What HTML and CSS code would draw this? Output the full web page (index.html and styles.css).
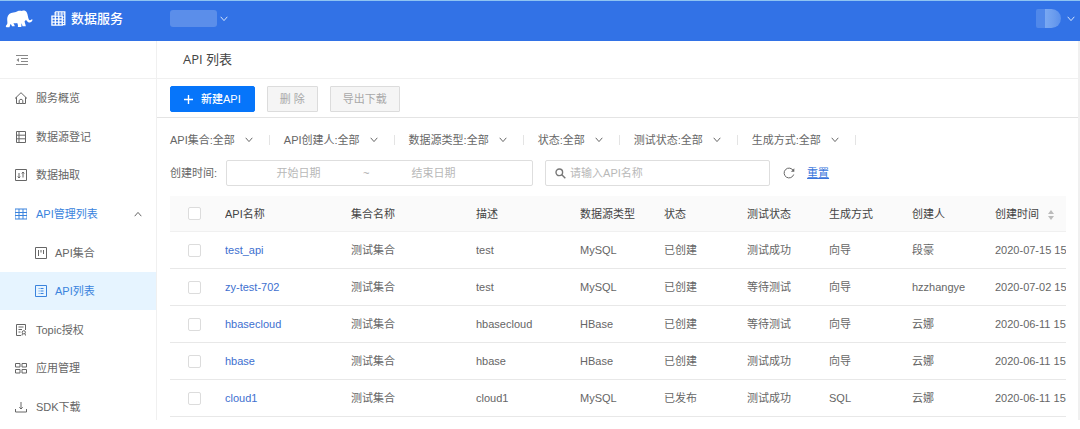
FILE: index.html
```html
<!DOCTYPE html>
<html lang="zh-CN">
<head>
<meta charset="utf-8">
<title>数据服务 - API 列表</title>
<link rel="stylesheet" href="styles.css">
</head>
<body>
<svg class="defs" aria-hidden="true">
  <symbol id="chevron" viewBox="0 0 8 8"><path d="M0.7 1.8 4 5.6 7.3 1.8" fill="none" stroke="currentColor"/></symbol>
</svg>
<header class="topbar">
  <svg class="logo" viewBox="0 0 28 18" aria-label="logo"><path fill="#fff" d="M.8 16.500C.8 15.500 2.200 14.800 2.400 13.200C2.500 11.500 2 10 2.300 7.800C2.800 4.500 5 2.600 8.500 2.400C10.500 2.300 11.500 1.900 13 1.100C14.500.300 15.800.900 17 .900C18.800.200 20.800.700 21.800 2.600C22.800 4.500 22.900 7.300 23.700 9.300C24.200 10.500 25.600 10.600 26.800 9.200L27.600 9.800C27 12 25.300 13 23.700 12.400C22.200 11.800 21.700 10.600 21 9.800C20.500 10.500 20 11 19.600 11.300C19.800 13 20.600 14.300 20.800 16.300H17.500L16.700 13.200C16.200 14.300 16.600 15.300 16.300 17H12.900C13.200 15.400 12.700 14.200 12.200 13C10.800 13.400 9.600 13.400 8.500 13.200C8.700 14.200 9.700 14.800 9.700 16.300H7C6.700 15.200 6.300 14.500 5.600 13.900C4.900 14.900 5 16.200 4.400 17.300H1.400Z"/></svg>
  <div class="product">
    <svg class="product-icon" viewBox="0 0 16 16" fill="none" stroke="#fff"><path d="M4.500 1H14.700V14.500H12M4.500 1V5" stroke-width="1.400"/><path d="M1 5.500H12V15H1ZM1 8.600H12M1 11.800H12M4.600 5.500V15M8.300 5.500V15" stroke-width="1.400"/><path d="M5 3.200H14M8 1V5M11.500 1V5M12 6.500H14.500M12 9.500H14.500M12 12.200H14.500" stroke-width=".9"/></svg>
    <span>数据服务</span>
  </div>
  <button class="picker project" aria-label="项目"><span class="mask"></span><svg class="chev"><use href="#chevron"/></svg></button>
  <button class="picker user" aria-label="用户"><span class="mask avatar"></span><svg class="chev"><use href="#chevron"/></svg></button>
</header>
<div class="shell">
  <nav class="sidebar">
    <button class="collapse" aria-label="收起"><svg class="icon" viewBox="0 0 12 12"><path d="M0 1.500H12M5 4.500H12M5 7.500H12M0 10.500H12"/><path d="M3 4 .5 6 3 8Z" fill="currentColor" stroke="none"/></svg></button>
    <ul class="menu">
      <li><a href="#"><svg class="icon" viewBox="0 0 12 12"><path d="M0 6.500 6 .7l6 5.800M1.500 5.200V11.500H4.200V8.300Q6 5.900 7.800 8.300V11.500H10.500V5.200M4.200 11.500H7.800"/></svg>服务概览</a></li>
      <li><a href="#"><svg class="icon" viewBox="0 0 12 12"><path d="M1.500.5H10.500V11.500H1.500ZM1.500 4.200H10.500M1.500 7.800H10.500M4 .5V11.500"/></svg>数据源登记</a></li>
      <li><a href="#"><svg class="icon" viewBox="0 0 12 12"><path d="M.5.5H11.500V11.500H.5ZM4 4V9M2.800 7.500 4 9 5.200 7.500M8 8.500V3M6.800 4.500 8 3 9.200 4.500"/></svg>数据抽取</a></li>
      <li class="group">
        <a href="#" class="active"><svg class="icon" viewBox="0 0 12 12"><path d="M0 1H12V11H0ZM0 4.500H12M0 7.500H12M4 1V11M8 1V11"/></svg>API管理列表<svg class="chev up"><use href="#chevron"/></svg></a>
        <ul class="submenu">
          <li><a href="#"><svg class="icon" viewBox="0 0 12 12"><path d="M.5.5H11.500V11.500H.5ZM3.500 3V9M6 3V5.500M8.500 3V7"/></svg>API集合</a></li>
          <li><a href="#" class="active current"><svg class="icon" viewBox="0 0 12 12"><path d="M.5.5H11.500V11.500H.5ZM5.500 3.500H8.500M5.500 6H8.500M5.500 8.500H8.500M3.700 3.500H4.500M3.700 6H4.500M3.700 8.500H4.500"/></svg>API列表</a></li>
        </ul>
      </li>
      <li><a href="#"><svg class="icon" viewBox="0 0 12 12"><path d="M6 11.500H1.500V.5H10.500V6M3.500 3H8.500M3.500 5.500H7M3.500 8H5.500M7 11.500 7.500 9.500M10.500 11.500 10 9.500"/><circle cx="8.800" cy="8.300" r="1.600"/></svg>Topic授权</a></li>
      <li><a href="#"><svg class="icon" viewBox="0 0 12 12"><path d="M.5 1.500H5V5H.5ZM7 1.500H11.500V5H7ZM.5 7.500H5V11H.5ZM7 7.500H11.500V11H7Z"/></svg>应用管理</a></li>
      <li><a href="#"><svg class="icon" viewBox="0 0 12 12"><path d="M6 1V8M4.300 6.300 6 8 7.700 6.300M.5 8V11H11.500V8"/></svg>SDK下载</a></li>
    </ul>
  </nav>
  <main class="content">
    <h1 class="title">API 列表</h1>
    <div class="toolbar">
      <button class="btn primary"><svg class="plus" viewBox="0 0 9 9"><path d="M4.500 0V9M0 4.500H9"/></svg>新建API</button>
      <button class="btn" disabled>删 除</button>
      <button class="btn" disabled>导出下载</button>
    </div>
    <div class="filters">
      <div class="filter"><label for="f1">API集合:</label><span class="drop"><select id="f1"><option>全部</option></select><svg class="chev"><use href="#chevron"/></svg></span></div>
      <div class="filter"><label for="f2">API创建人:</label><span class="drop"><select id="f2"><option>全部</option></select><svg class="chev"><use href="#chevron"/></svg></span></div>
      <div class="filter"><label for="f3">数据源类型:</label><span class="drop"><select id="f3"><option>全部</option></select><svg class="chev"><use href="#chevron"/></svg></span></div>
      <div class="filter"><label for="f4">状态:</label><span class="drop"><select id="f4"><option>全部</option></select><svg class="chev"><use href="#chevron"/></svg></span></div>
      <div class="filter"><label for="f5">测试状态:</label><span class="drop"><select id="f5"><option>全部</option></select><svg class="chev"><use href="#chevron"/></svg></span></div>
      <div class="filter"><label for="f6">生成方式:</label><span class="drop"><select id="f6"><option>全部</option></select><svg class="chev"><use href="#chevron"/></svg></span></div>
    </div>
    <div class="search-row">
      <label for="start">创建时间:</label>
      <div class="field range"><input id="start" placeholder="开始日期"><span>~</span><input aria-label="结束日期" placeholder="结束日期"></div>
      <div class="field search"><svg class="lens" viewBox="0 0 11 11"><circle cx="4.300" cy="4.300" r="3.300"/><path d="M6.800 6.800 10.300 10.300"/></svg><input aria-label="API名称" placeholder="请输入API名称"></div>
      <button class="refresh" aria-label="刷新"><svg class="icon" viewBox="0 0 12 12"><path d="M10.300 3.600A4.900 4.900 0 1 0 10.700 7.500"/><path d="M11.300 1.300V4.800H7.900Z" fill="currentColor" stroke="none"/></svg></button>
      <a href="#" class="reset">重置</a>
    </div>
    <table class="grid">
      <colgroup><col class="c-check"><col class="c-name"><col class="c-set"><col class="c-desc"><col class="c-source"><col class="c-std"><col class="c-test"><col class="c-std"><col class="c-std"><col class="c-time"></colgroup>
      <thead>
        <tr><th><input type="checkbox" aria-label="全选"></th><th>API名称</th><th>集合名称</th><th>描述</th><th>数据源类型</th><th>状态</th><th>测试状态</th><th>生成方式</th><th>创建人</th><th>创建时间<svg class="sort" viewBox="0 0 6 10"><path d="M3 0 6 4H0ZM3 10 0 6H6Z"/></svg></th></tr>
      </thead>
      <tbody>
        <tr><td><input type="checkbox" aria-label="test_api"></td><td><a href="#">test_api</a></td><td>测试集合</td><td>test</td><td>MySQL</td><td>已创建</td><td>测试成功</td><td>向导</td><td>段豪</td><td>2020-07-15 15</td></tr>
        <tr><td><input type="checkbox" aria-label="zy-test-702"></td><td><a href="#">zy-test-702</a></td><td>测试集合</td><td>test</td><td>MySQL</td><td>已创建</td><td>等待测试</td><td>向导</td><td>hzzhangye</td><td>2020-07-02 15</td></tr>
        <tr><td><input type="checkbox" aria-label="hbasecloud"></td><td><a href="#">hbasecloud</a></td><td>测试集合</td><td>hbasecloud</td><td>HBase</td><td>已创建</td><td>等待测试</td><td>向导</td><td>云娜</td><td>2020-06-11 15</td></tr>
        <tr><td><input type="checkbox" aria-label="hbase"></td><td><a href="#">hbase</a></td><td>测试集合</td><td>hbase</td><td>HBase</td><td>已创建</td><td>测试成功</td><td>向导</td><td>云娜</td><td>2020-06-11 15</td></tr>
        <tr><td><input type="checkbox" aria-label="cloud1"></td><td><a href="#">cloud1</a></td><td>测试集合</td><td>cloud1</td><td>MySQL</td><td>已发布</td><td>测试成功</td><td>SQL</td><td>云娜</td><td>2020-06-11 15</td></tr>
      </tbody>
    </table>
  </main>
</div>
</body>
</html>
```
FILE: styles.css
```css
* { box-sizing: border-box; }

body {
  margin: 0;
  min-height: 100vh;
  display: flex;
  flex-direction: column;
  background: #fff;
  color: #666;
  font: 11px/16px "Liberation Sans", "Noto Sans CJK SC", sans-serif;
}

button, input, select { font: inherit; color: inherit; margin: 0; padding: 0; border: 0; background: none; }
a { text-decoration: none; color: inherit; }
ul { list-style: none; margin: 0; padding: 0; }
svg { flex: none; }

.defs { display: none; }
.chev { width: 8px; height: 8px; }
.up { transform: rotate(180deg); }
.icon { width: 12px; height: 12px; fill: none; stroke: currentColor; }

/* top bar */
.topbar {
  display: flex;
  align-items: center;
  height: 41px;
  padding: 0 5px 5px;
  border-top: 1px solid #8fc4f2;
  background: #3272e6;
  color: #fff;
}
.logo { width: 28px; height: 18px; }
.product { display: flex; align-items: center; gap: 5px; width: 119px; margin-left: 18px; font-size: 13px; font-weight: 500; }
.product-icon { width: 15px; height: 15px; }
.picker { display: flex; align-items: center; color: #d5e4fb; }
.project { gap: 3px; }
.mask { width: 47px; height: 17px; border-radius: 3px; background: #5b8eea; }
.user { gap: 6px; margin-left: auto; }
.avatar { width: 25px; height: 19px; border-radius: 2px 10px 10px 2px; background: linear-gradient(90deg, #5088ea 36%, #79a8f2 36%, #6c9dee 70%, #5a90ec); }

/* side navigation */
.shell { flex: 1; display: flex; }
.sidebar { display: flex; flex-direction: column; width: 156px; padding-bottom: 3px; }
.collapse { display: flex; align-items: center; height: 38px; padding-left: 16px; border-bottom: 1px solid #f0f0f0; color: #888; }
.menu { flex: 1; display: flex; flex-direction: column; }
.menu li { flex: 1; display: flex; flex-direction: column; }
.menu .group { flex: 3; }
.menu a { flex: 1; display: flex; align-items: center; gap: 9px; padding: 0 14px 0 15px; }
.submenu { flex: 2; display: flex; flex-direction: column; }
.menu .submenu a { gap: 8px; padding-left: 35px; }
.menu .active { color: #3a83dd; }
.menu .current { background: #e6f4ff; }
.menu .chev { margin-left: auto; color: #666; }

/* content */
.content { flex: 1; min-width: 0; margin-bottom: 9px; border: solid #f0f0f0; border-width: 0 2px 0 1px; }
.title { margin: 0; padding: 8px 26px 9px; border-bottom: 1px solid #f0f0f0; color: #444; font: 400 13px/20px "Open Sans", "Noto Sans CJK SC", sans-serif; }
.toolbar { display: flex; gap: 12px; padding: 7px 13px 5px; border-bottom: 1px solid #e4e4e4; }
.btn { height: 26px; padding: 0 12px; border: 1px solid #dcdcdc; border-radius: 1px; background: #f5f5f5; color: #a8a8a8; }
.primary { display: flex; align-items: center; gap: 8px; padding: 0 13px; border-color: #0675fa; border-radius: 2px; background: #0675fa; color: #fff; font-weight: 500; }
.plus { width: 9px; height: 9px; stroke: #fff; stroke-width: 1.4; }

.filters { display: flex; gap: 14px; padding: 14px 13px 0; }
.filter { display: flex; align-items: center; padding-right: 17px; background: linear-gradient(#e4e4e4, #e4e4e4) right center / 1px 10px no-repeat; }
.drop { display: grid; align-items: center; }
.drop > * { grid-area: 1 / 1; }
.drop select { width: 40px; height: 16px; appearance: none; }
.drop .chev { justify-self: end; pointer-events: none; }

.search-row { display: flex; align-items: center; padding: 12px 13px 10px; }
.field { display: flex; align-items: center; height: 26px; border: 1px solid #dedede; border-radius: 2px; color: #aaa; }
.field input { min-width: 0; outline: 0; }
.field input::placeholder { color: #b8b8b8; opacity: 1; }
.range { width: 307px; margin-left: 9px; padding: 0 34px 0 7px; }
.range input { flex: 1; text-align: center; }
.range span { width: 6px; text-align: center; }
.search { gap: 4px; width: 225px; margin-left: 12px; padding: 0 9px; }
.search input { flex: 1; }
.lens { width: 11px; height: 11px; fill: none; stroke: #777; stroke-width: 1.4; }
.refresh { display: flex; margin-left: 13px; }
.reset { margin-left: 12px; color: #3a76dc; text-decoration: underline; }

/* table */
.grid { width: calc(100% - 25px); margin-left: 13px; table-layout: fixed; border-collapse: separate; border-spacing: 0; }
.c-check { width: 55px; }
.c-name { width: 126px; }
.c-set { width: 125px; }
.c-desc { width: 104px; }
.c-source { width: 84px; }
.c-std { width: 83px; }
.c-test { width: 82px; }
.c-time { width: 71px; }
.grid th, .grid td { height: 37px; padding: 0; border-bottom: 1px solid #e8e8e8; text-align: left; white-space: nowrap; overflow: hidden; }
.grid th { height: 36px; background: #fafafa; color: #444; font-weight: 400; border-color: #f0f0f0; }
.grid td a { color: #4070cf; }
.grid input { display: block; width: 13px; height: 13px; margin-left: 18px; appearance: none; border: 1px solid #dcdcdc; border-radius: 2px; background: #fff; }
.sort { width: 6px; height: 10px; margin-left: 9px; vertical-align: middle; fill: #bbb; }
```
